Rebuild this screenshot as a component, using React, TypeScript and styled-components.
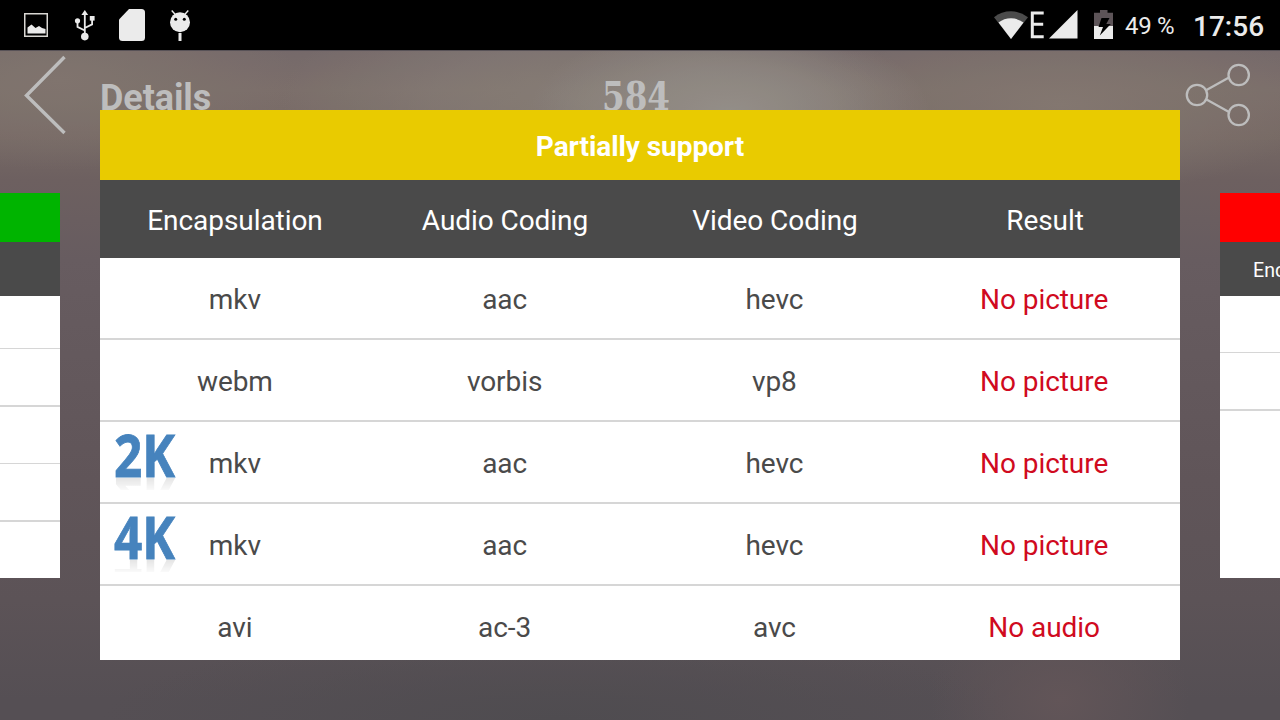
import React from "react";
import styled, { createGlobalStyle } from "styled-components";

const GlobalStyle = createGlobalStyle`
  * {
    box-sizing: border-box;
  }
  body {
    margin: 0;
    background: #5a5256;
    font-family: Roboto, "Liberation Sans", sans-serif;
  }
`;

const Screen = styled.div`
  display: flex;
  flex-direction: column;
  width: 1280px;
  height: 720px;
  overflow: hidden;
  background:
    radial-gradient(ellipse 200px 90px at 730px 112px, #96928c, #96928c99 50%, transparent),
    radial-gradient(ellipse 300px 110px at 580px 100px, #8e888099, #8e888066 50%, transparent),
    radial-gradient(ellipse 240px 90px at 60px 80px, #80756f, transparent),
    radial-gradient(ellipse 260px 90px at 1060px 105px, #837871, transparent),
    radial-gradient(ellipse 130px 110px at 1060px 700px, #625558, transparent),
    radial-gradient(ellipse 460px 90px at 560px 720px, #4f4c50, transparent),
    linear-gradient(#74686a 50px, #7a6e6a 90px, #756864 140px, #6d6060 180px, #675c60 260px, #605559 480px, #5c5357 600px, #554f54 700px);
`;

const StatusBar = styled.div`
  display: flex;
  justify-content: space-between;
  align-items: center;
  flex-shrink: 0;
  height: 50px;
  background: #000;
  color: #ebebeb;
`;

const StatusGroup = styled.div`
  display: flex;
  align-items: center;
  height: 50px;
`;

const BatteryText = styled.span`
  width: 50px;
  margin: 2px 0 0 11px;
  font-size: 24px;
  letter-spacing: -0.3px;
  white-space: nowrap;
`;

const Clock = styled.span`
  width: 71px;
  margin: 2px 16px 0 18px;
  font-size: 28px;
  font-weight: 500;
  white-space: nowrap;
`;

const Header = styled.header`
  display: grid;
  grid-template-columns: 100px 1fr 76px 1fr 100px;
  flex-shrink: 0;
  height: 90px;
  border-top: 1px solid #585257;
  background: rgba(130, 118, 108, 0.12);
  color: #bdbdbd;
`;

const PageTitle = styled.h1`
  margin: 0;
  padding-top: 25px;
  font-size: 36px;
  line-height: 44px;
  font-weight: 700;
  letter-spacing: -0.1px;
`;

const Score = styled.svg`
  display: block;
  font-family: "DejaVu Serif Condensed", "DejaVu Serif", serif;
  font-size: 40px;
  font-weight: 700;
`;

const Carousel = styled.main`
  display: flex;
  justify-content: center;
  align-items: center;
  gap: 40px;
  width: 1280px;
  height: 550px;
  margin-top: -30px;
  position: relative;
`;

const CardBox = styled.section<{ $scale: number }>`
  --u: ${({ $scale }) => $scale}px;
  display: flex;
  flex-direction: column;
  flex-shrink: 0;
  width: calc(1080 * var(--u));
  height: calc(550 * var(--u));
  overflow: hidden;
  background: #fff;
  font-size: calc(28 * var(--u));
  letter-spacing: calc(-0.06 * var(--u));
`;

const CardTitle = styled.h2<{ $color: string }>`
  display: flex;
  justify-content: center;
  align-items: center;
  flex-shrink: 0;
  height: calc(70 * var(--u));
  margin: 0;
  padding-top: calc(3 * var(--u));
  background: ${({ $color }) => $color};
  color: #fff;
  font-size: inherit;
  font-weight: 700;
`;

const Columns = styled.div`
  display: grid;
  grid-template-columns: repeat(4, 1fr);
  flex-shrink: 0;
  align-items: center;
  text-align: center;
`;

const HeadRow = styled(Columns)`
  height: calc(78 * var(--u));
  padding-top: calc(3.6 * var(--u));
  background: #4a4a4a;
  color: #fff;
`;

const Rows = styled.div<{ $scroll: number }>`
  flex: 1;
  overflow: hidden;

  > :first-child {
    margin-top: ${({ $scroll }) => -$scroll}px;
  }
`;

const Row = styled(Columns)`
  position: relative;
  height: calc(80 * var(--u));
  padding: calc(2 * var(--u)) calc(1 * var(--u)) 0 0;
  color: #4a4a4a;
`;

const Divider = styled.div`
  height: calc(2 * var(--u));
  background: #d6d6d6;
`;

const Result = styled.span`
  color: #d00a20;
`;

const Badge = styled.svg`
  position: absolute;
  left: 14px;
  top: 8px;
`;

interface IRow {
  encapsulation: string;
  audio: string;
  video: string;
  result: string;
  badge?: string;
}

const partialRows: IRow[] = [
  { encapsulation: "mkv", audio: "aac", video: "hevc", result: "No picture" },
  { encapsulation: "webm", audio: "vorbis", video: "vp8", result: "No picture" },
  { encapsulation: "mkv", audio: "aac", video: "hevc", result: "No picture", badge: "2K" },
  { encapsulation: "mkv", audio: "aac", video: "hevc", result: "No picture", badge: "4K" },
  { encapsulation: "avi", audio: "ac-3", video: "avc", result: "No audio" },
];

const blankRow: IRow = { encapsulation: "", audio: "", video: "", result: "" };

function ResolutionBadge({ label }: { label: string }) {
  const text = {
    x: 0,
    y: 47,
    fontFamily: '"Open Sans", "Noto Sans", sans-serif',
    fontSize: 59,
    fontWeight: 700,
    textLength: 61,
    lengthAdjust: "spacingAndGlyphs" as const,
  };
  return (
    <Badge width="66" height="62" viewBox="0 0 66 62">
      <defs>
        <linearGradient id={`fade${label}`} x1="0" y1="47" x2="0" y2="60" gradientUnits="userSpaceOnUse">
          <stop offset="0" stopColor="#fff" stopOpacity="0.8" />
          <stop offset="1" stopColor="#fff" stopOpacity="0.15" />
        </linearGradient>
        <mask id={`mask${label}`} maskUnits="userSpaceOnUse" x="0" y="47" width="66" height="13">
          <rect y="47" width="66" height="13" fill={`url(#fade${label})`} />
        </mask>
      </defs>
      <text {...text} fill="#4683bd" stroke="#4683bd" strokeWidth="0.8">
        {label}
      </text>
      <g mask={`url(#mask${label})`} aria-hidden="true">
        <g transform="translate(0 95) scale(1 -1)">
          <text {...text} fill="#dcdcdc">
            {label}
          </text>
        </g>
      </g>
    </Badge>
  );
}

function Card({
  title,
  color,
  rows,
  scale = 1,
  scroll = 0,
}: {
  title: string;
  color: string;
  rows: IRow[];
  scale?: number;
  scroll?: number;
}) {
  return (
    <CardBox $scale={scale}>
      <CardTitle $color={color}>{title}</CardTitle>
      <HeadRow>
        <span>Encapsulation</span>
        <span>Audio Coding</span>
        <span>Video Coding</span>
        <span>Result</span>
      </HeadRow>
      <Rows $scroll={scroll}>
        {rows.map((row, i) => (
          <React.Fragment key={i}>
            <Row>
              {row.badge && <ResolutionBadge label={row.badge} />}
              <span>{row.encapsulation}</span>
              <span>{row.audio}</span>
              <span>{row.video}</span>
              <Result>{row.result}</Result>
            </Row>
            <Divider />
          </React.Fragment>
        ))}
      </Rows>
    </CardBox>
  );
}

function NotificationIcons() {
  return (
    <svg width="220" height="50" viewBox="0 0 220 50" fill="#ebebeb">
      {/* picture */}
      <rect x="24.75" y="13.75" width="22.5" height="22.5" fill="none" stroke="#d9d7d3" strokeWidth="1.5" />
      <path d="M27.5 33.500V27.500l4-3 4 3.600 3.500-2 3 2 3.500 1v4.400z" />
      {/* usb */}
      <g fill="none" stroke="#ebebeb" strokeWidth="1.800">
        <path d="M84.800 36V13M84.800 30.500l-7.300-3.600V21M84.800 28l7.300-3.600V18" />
      </g>
      <path d="M84.800 10l3.400 5h-6.800z" />
      <circle cx="84.800" cy="36.600" r="3.800" />
      <circle cx="77.500" cy="20.800" r="2.600" />
      <rect x="89.800" y="16" width="4.800" height="4.600" />
      {/* sd card */}
      <path d="M129 9h12.500a3.500 3.500 0 0 1 3.500 3.500v25a3.500 3.500 0 0 1-3.500 3.500h-19a3.500 3.500 0 0 1-3.500-3.500V19.500z" />
      {/* android head */}
      <circle cx="180" cy="22.300" r="10" />
      <path d="M171.700 10.500l4.500 5M188.300 10.500l-4.500 5" stroke="#ebebeb" strokeWidth="1.400" />
      <rect x="178.500" y="33" width="3" height="8" />
      <circle cx="175.700" cy="19.300" r="1.500" fill="#000" />
      <circle cx="184.300" cy="19.300" r="1.500" fill="#000" />
    </svg>
  );
}

function SignalIcons() {
  return (
    <svg width="124" height="50" viewBox="990 0 124 50" fill="#ebebeb">
      {/* wifi */}
      <path d="M1011 39L994 17.200a27.500 27.500 0 0 1 34 0z" fill="#4b4b4b" />
      <path d="M1011 39L998.500 22.600a20.500 20.500 0 0 1 25 0z" />
      {/* edge */}
      <path d="M1043.700 13H1032.300v23.700h11.400M1032.300 24.300h10.900" fill="none" stroke="#ebebeb" strokeWidth="3" />
      {/* cell signal */}
      <path d="M1049 38.500L1077.500 10v28.500z" />
      {/* battery */}
      <path d="M1100 10h7.500v2.700h5.500V26h-19V12.700h6z" fill="#5d5458" />
      <path d="M1094 26h19v13h-19z" />
      <path d="M1101.500 18h8l-3.200 6h4.500l-11 11.500 3.200-8.500h-4.500z" fill="#000" />
    </svg>
  );
}

function BackIcon() {
  return (
    <svg width="100" height="89" viewBox="0 51 100 89">
      <path d="M64.500 57L26.500 95.500 64.500 133" fill="none" stroke="#bdbdbd" strokeWidth="3.400" />
    </svg>
  );
}

function ShareIcon() {
  return (
    <svg width="100" height="89" viewBox="1180 51 100 89" fill="none" stroke="#bdbdbd" strokeWidth="2.300">
      <circle cx="1197" cy="95" r="10.200" />
      <circle cx="1238.700" cy="75" r="10.200" />
      <circle cx="1238.700" cy="115" r="10.200" />
      <path d="M1206.500 90l22.500-12.500M1206.500 99.500l22.500 12.500" />
    </svg>
  );
}

export default function App() {
  return (
    <>
      <GlobalStyle />
      <Screen>
        <StatusBar>
          <NotificationIcons />
          <StatusGroup>
            <SignalIcons />
            <BatteryText>49 %</BatteryText>
            <Clock>17:56</Clock>
          </StatusGroup>
        </StatusBar>
        <Header>
          <BackIcon />
          <PageTitle>Details</PageTitle>
          <Score width="76" height="70" viewBox="0 0 76 70">
            <text x="0" y="59" fill="#bdbdbd" textLength="68" lengthAdjust="spacingAndGlyphs">
              584
            </text>
          </Score>
          <span />
          <ShareIcon />
        </Header>
        <Carousel>
          <Card title="Support" color="#00b400" rows={Array(5).fill(blankRow)} scale={0.7} scroll={4} />
          <Card title="Partially support" color="#e9cb00" rows={partialRows} />
          <Card title="Not support" color="#ff0000" rows={[blankRow, blankRow]} scale={0.7} />
        </Carousel>
      </Screen>
    </>
  );
}
